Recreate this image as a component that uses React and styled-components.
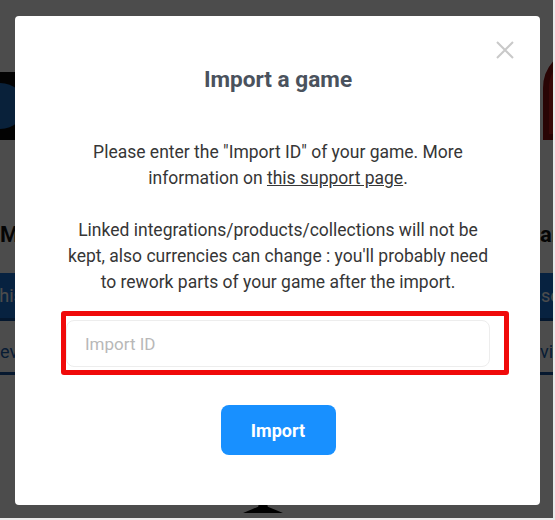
import React from 'react';
import styled, { createGlobalStyle } from 'styled-components';

const GlobalStyle = createGlobalStyle`
  html, body {
    margin: 0;
    padding: 0;
    width: 555px;
    height: 520px;
    overflow: hidden;
    font-family: Roboto, "Liberation Sans", Arial, sans-serif;
    background: #ffffff;
  }
`;

const Page = styled.div`
  width: 553px;
  height: 518px;
  overflow: hidden;
  border-right: 2px solid #eaeaea;
  border-bottom: 2px solid #eaeaea;
  background: #ffffff;
`;

const CardRow = styled.div`
  display: flex;
  gap: 340px;
  margin-left: -45px;
  padding-top: 40px;
`;

const Card = styled.div`
  flex: 0 0 235px;
  display: flex;
  flex-direction: column;
  align-items: stretch;
`;

const Picture = styled.div`
  height: 100px;
  display: flex;
  align-items: flex-end;
  padding-left: ${({ $inset }) => $inset || 0}px;
`;

const DarkThumb = styled.div`
  width: 100%;
  height: 68px;
  background: #0b0b0b;
  display: flex;
  align-items: center;
  justify-content: flex-end;
  padding-right: 165px;
`;

const BlueDot = styled.div`
  width: 50px;
  height: 46px;
  border-radius: 50%;
  background: #1f6fc4;
`;

const RedThumb = styled.div`
  width: 100%;
  height: 92px;
  box-sizing: border-box;
  border-top-left-radius: 40px;
  border: 6px solid #8a1010;
  background: linear-gradient(90deg, #c41d1d 0%, #c41d1d 30%, #d9b51e 60%, #e3cf3c 100%);
`;

const CardTitle = styled.div`
  margin-top: 82px;
  padding-left: ${({ $inset }) => $inset || 0}px;
  font-size: 22px;
  font-weight: 700;
  color: #111;
  line-height: 26px;
  white-space: nowrap;
`;

const CardButton = styled.div`
  margin-top: 25px;
  height: 45px;
  background: #1a74d8;
  color: #fff;
  font-size: 18px;
  display: flex;
  align-items: center;
  padding-left: ${({ $inset }) => $inset || 0}px;
  border-bottom: 3px solid #0f4f9c;
  white-space: nowrap;
`;

const CardLink = styled.div`
  margin-top: 20px;
  padding: 0 0 10px ${({ $inset }) => $inset || 0}px;
  font-size: 18px;
  color: #1a5fb0;
  border-bottom: 3px solid #14539e;
  white-space: nowrap;
`;

const Footer = styled.div`
  margin-top: 124px;
  padding-left: 243px;
`;

const Stand = styled.div`
  width: 40px;
  height: 14px;
  background: #000;
  clip-path: polygon(42% 0, 58% 0, 62% 55%, 100% 100%, 0 100%, 38% 55%);
`;

const Overlay = styled.div`
  position: fixed;
  inset: 0 2px 2px 0;
  background: rgba(0, 0, 0, 0.7);
  display: flex;
  align-items: flex-start;
  justify-content: flex-start;
`;

const Modal = styled.div`
  position: relative;
  margin: 16px 0 0 15px;
  width: 525px;
  height: 489px;
  box-sizing: border-box;
  background: #fff;
  border-radius: 4px;
  padding: 49px 50px 0 51px;
  display: flex;
  flex-direction: column;
  align-items: center;
`;

const CloseButton = styled.button`
  position: absolute;
  top: 25px;
  right: 26px;
  width: 18px;
  height: 18px;
  padding: 0;
  border: none;
  background: none;
  cursor: pointer;
  svg {
    display: block;
  }
`;

const Title = styled.h2`
  margin: 0;
  font-size: 22.6px;
  line-height: 30px;
  font-weight: 700;
  color: #4a525d;
`;

const Body = styled.div`
  margin-top: 44px;
  width: 100%;
  text-align: center;
  font-size: 17.5px;
  line-height: 26px;
  color: #363636;
  p {
    margin: 0 0 26px;
  }
  p:last-child {
    margin-bottom: 0;
  }
  a {
    color: inherit;
    text-decoration: underline;
  }
`;

const Highlight = styled.div`
  margin: 16px -19px 0 -5px;
  align-self: stretch;
  border: 5px solid #f00a0a;
  border-radius: 3px;
  padding: 4px 14px 3px 0;
`;

const Input = styled.input`
  display: block;
  box-sizing: border-box;
  width: 100%;
  height: 47px;
  border: 1px solid #ededed;
  border-radius: 8px;
  padding: 0 18px;
  font-family: inherit;
  font-size: 17px;
  color: #333;
  outline: none;
  &::placeholder {
    color: #b8b8b8;
  }
`;

const PrimaryButton = styled.button`
  margin-top: 30px;
  width: 115px;
  height: 50px;
  border: none;
  border-radius: 8px;
  background: #1890ff;
  color: #fff;
  font-family: inherit;
  font-size: 18px;
  font-weight: 700;
  cursor: pointer;
`;

export default function App() {
  return (
    <>
      <GlobalStyle />
      <Page>
        <CardRow>
          <Card>
            <Picture>
              <DarkThumb>
                <BlueDot />
              </DarkThumb>
            </Picture>
            <CardTitle $inset={45}>Mario party</CardTitle>
            <CardButton $inset={0}>Play this game</CardButton>
            <CardLink $inset={34}>Reviews</CardLink>
          </Card>
          <Card>
            <Picture $inset={13}>
              <RedThumb />
            </Picture>
            <CardTitle $inset={10}>arcade</CardTitle>
            <CardButton $inset={11}>see this</CardButton>
            <CardLink $inset={10}>view</CardLink>
          </Card>
        </CardRow>
        <Footer>
          <Stand />
        </Footer>
      </Page>
      <Overlay>
        <Modal>
          <CloseButton aria-label="Close">
            <svg width="18" height="18" viewBox="0 0 18 18">
              <path d="M1 1 L17 17 M17 1 L1 17" stroke="#c9c9c9" strokeWidth="2" fill="none" />
            </svg>
          </CloseButton>
          <Title>Import a game</Title>
          <Body>
            <p>
              Please enter the "Import ID" of your game. More information on{' '}
              <a href="#support">this support page</a>.
            </p>
            <p>
              Linked integrations/products/collections will not be kept, also currencies can
              change : you'll probably need to rework parts of your game after the import.
            </p>
          </Body>
          <Highlight>
            <Input placeholder="Import ID" />
          </Highlight>
          <PrimaryButton>Import</PrimaryButton>
        </Modal>
      </Overlay>
    </>
  );
}
